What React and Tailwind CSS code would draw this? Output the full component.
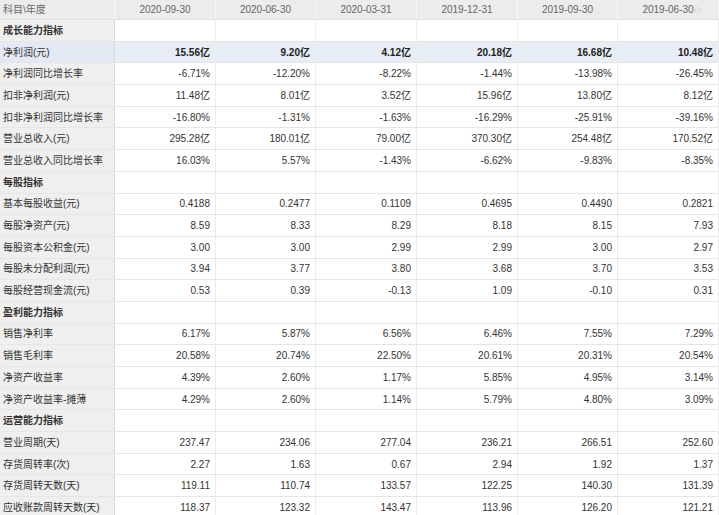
import React from "react";
import { ChevronsRight } from "lucide-react";

const dates = ["2020-09-30", "2020-06-30", "2020-03-31", "2019-12-31", "2019-09-30", "2019-06-30"];

const rows = [
  { section: "成长能力指标" },
  { label: "净利润(元)", bold: true, hl: true, v: ["15.56亿", "9.20亿", "4.12亿", "20.18亿", "16.68亿", "10.48亿"] },
  { label: "净利润同比增长率", v: ["-6.71%", "-12.20%", "-8.22%", "-1.44%", "-13.98%", "-26.45%"] },
  { label: "扣非净利润(元)", v: ["11.48亿", "8.01亿", "3.52亿", "15.96亿", "13.80亿", "8.12亿"] },
  { label: "扣非净利润同比增长率", v: ["-16.80%", "-1.31%", "-1.63%", "-16.29%", "-25.91%", "-39.16%"] },
  { label: "营业总收入(元)", v: ["295.28亿", "180.01亿", "79.00亿", "370.30亿", "254.48亿", "170.52亿"] },
  { label: "营业总收入同比增长率", v: ["16.03%", "5.57%", "-1.43%", "-6.62%", "-9.83%", "-8.35%"] },
  { section: "每股指标" },
  { label: "基本每股收益(元)", v: ["0.4188", "0.2477", "0.1109", "0.4695", "0.4490", "0.2821"] },
  { label: "每股净资产(元)", v: ["8.59", "8.33", "8.29", "8.18", "8.15", "7.93"] },
  { label: "每股资本公积金(元)", v: ["3.00", "3.00", "2.99", "2.99", "3.00", "2.97"] },
  { label: "每股未分配利润(元)", v: ["3.94", "3.77", "3.80", "3.68", "3.70", "3.53"] },
  { label: "每股经营现金流(元)", v: ["0.53", "0.39", "-0.13", "1.09", "-0.10", "0.31"] },
  { section: "盈利能力指标" },
  { label: "销售净利率", v: ["6.17%", "5.87%", "6.56%", "6.46%", "7.55%", "7.29%"] },
  { label: "销售毛利率", v: ["20.58%", "20.74%", "22.50%", "20.61%", "20.31%", "20.54%"] },
  { label: "净资产收益率", v: ["4.39%", "2.60%", "1.17%", "5.85%", "4.95%", "3.14%"] },
  { label: "净资产收益率-摊薄", v: ["4.29%", "2.60%", "1.14%", "5.79%", "4.80%", "3.09%"] },
  { section: "运营能力指标" },
  { label: "营业周期(天)", v: ["237.47", "234.06", "277.04", "236.21", "266.51", "252.60"] },
  { label: "存货周转率(次)", v: ["2.27", "1.63", "0.67", "2.94", "1.92", "1.37"] },
  { label: "存货周转天数(天)", v: ["119.11", "110.74", "133.57", "122.25", "140.30", "131.39"] },
  { label: "应收账款周转天数(天)", v: ["118.37", "123.32", "143.47", "113.96", "126.20", "121.21"] },
];

const cols = "grid grid-cols-[115px_101px_100px_101px_101px_100px_101px]";

const App = () => {
  return (
    <div className="w-[719px] h-[515px] overflow-hidden bg-white text-[10px] text-[#333] font-['Liberation_Sans','Noto_Sans_CJK_SC',sans-serif]">
      {/* 表头 */}
      <div className={`${cols} h-[20px] bg-[#ececec] text-[#666] border-b border-[#e2e2e2]`}>
        <div className="flex items-center pl-[3px] border-r border-[#f7f7f7]">科目\年度</div>
        {dates.map((d, i) => (
          <div key={d} className="relative flex items-center justify-center border-r border-[#f7f7f7]">
            {d}
            {i === dates.length - 1 && (
              <ChevronsRight size={14} strokeWidth={1.2} className="absolute right-[14px] top-[3px] text-[#bdbdbd]" />
            )}
          </div>
        ))}
      </div>

      {rows.map((r, idx) =>
        r.section ? (
          <div key={idx} className={`${cols} h-[21.7px] border-b border-[#e6e6e6]`}>
            <div className="flex items-center pl-[3px] bg-[#efefef] font-bold border-r border-[#d9d9d9]">{r.section}</div>
            {dates.map((d) => (
              <div key={d} className="border-r border-[#ececec]" />
            ))}
          </div>
        ) : (
          <div key={idx} className={`${cols} h-[21.7px] border-b border-[#e6e6e6] ${r.hl ? "bg-[#e6edf5]" : ""}`}>
            <div className={`flex items-center pl-[3px] border-r border-[#d9d9d9] ${r.hl ? "bg-[#e3eaf3]" : "bg-[#efefef]"}`}>
              {r.label}
            </div>
            {r.v.map((v, i) => (
              <div key={i} className={`flex items-center justify-end pr-[5px] border-r border-[#ececec] ${r.bold ? "font-bold text-[#222]" : ""}`}>
                {v}
              </div>
            ))}
          </div>
        )
      )}
    </div>
  );
};

export default App;
